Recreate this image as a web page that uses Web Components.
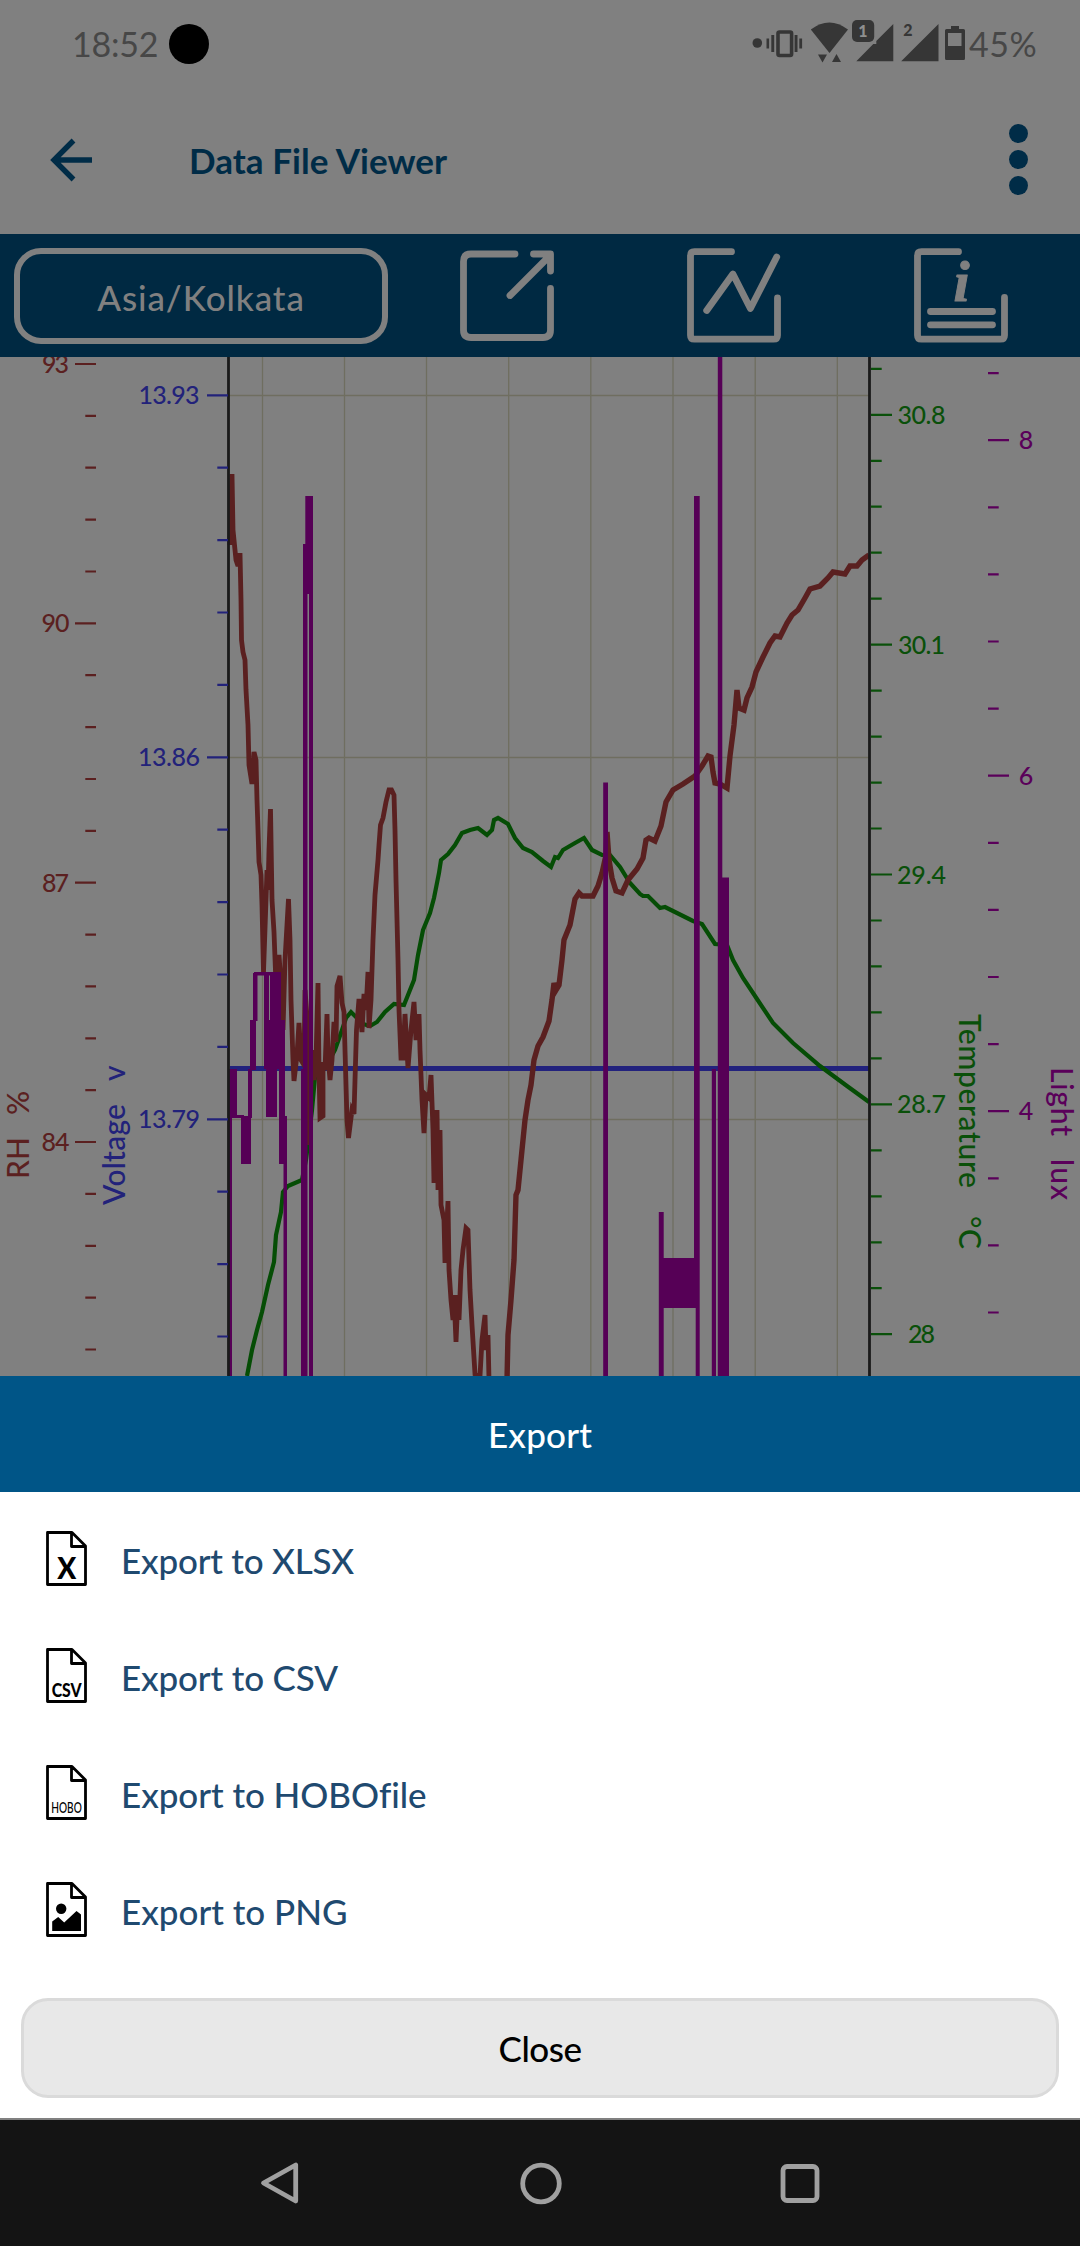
<!DOCTYPE html>
<html lang="en">
<head>
<meta charset="utf-8">
<title>Data File Viewer</title>
<style>
    html, body {
        margin: 0;
        padding: 0;
    }

    body {
        width: 1080px;
        height: 2246px;
        overflow: hidden;
        background: #808080;
        font-family: Lato, "Noto Sans", sans-serif;
    }
</style>
</head>
<body>
<viewer-app>
    <status-bar time="18:52" battery="45%"></status-bar>
    <title-bar>Data File Viewer</title-bar>
    <tool-bar>Asia/Kolkata</tool-bar>
    <data-chart></data-chart>
    <export-sheet heading="Export">
        <export-item icon="xlsx" style="--track: -0.2px">Export to XLSX</export-item>
        <export-item icon="csv" style="--track: -0.15px">Export to CSV</export-item>
        <export-item icon="hobo" style="--track: -0.05px">Export to HOBOfile</export-item>
        <export-item icon="png" style="--track: 0px">Export to PNG</export-item>
    </export-sheet>
    <nav-bar></nav-bar>
</viewer-app>

<script>
class ViewerApp extends HTMLElement {
    constructor() {
        super();
        this.attachShadow({ mode: "open" });
    }

    connectedCallback() {
        this.shadowRoot.innerHTML = `
            <style>
                :host {
                    display: flex;
                    flex-direction: column;
                    width: 1080px;
                    height: 2246px;
                }
            </style>
            <slot></slot>
        `;
    }
}

class StatusBar extends HTMLElement {
    constructor() {
        super();
        this.attachShadow({ mode: "open" });
    }

    connectedCallback() {
        this.shadowRoot.innerHTML = `
            <style>
                :host {
                    display: flex;
                    align-items: center;
                    box-sizing: border-box;
                    height: 88px;
                    padding: 0 42px 0 72px;
                    color: #474747;
                    font-size: 34px;
                    line-height: 40px;
                }

                .time {
                    width: 97px;
                    letter-spacing: -0.2px;
                }

                .camera {
                    width: 40px;
                    height: 40px;
                    border-radius: 50%;
                    background: #000;
                }

                svg {
                    display: block;
                    margin-left: auto;
                }

                .battery {
                    width: 69px;
                    margin-left: 2px;
                    white-space: nowrap;
                    letter-spacing: 0.5px;
                }
            </style>

            <span class="time">${this.getAttribute("time")}</span>
            <span class="camera"></span>
            <svg width="217" height="88" viewBox="750 0 217 88" fill="#363636">
                <!-- vibrate -->
                <circle cx="757.3" cy="43" r="4.8"/>
                <path d="M766.5 38.5h2.6v10h-2.6zM771.3 35h2.9v17h-2.9zM794.6 35h2.9v17h-2.9zM799.3 38.5h2.8v10h-2.8z"/>
                <rect x="778" y="32" width="13.6" height="23.5" rx="1.5" fill="none" stroke="#363636" stroke-width="3.6"/>
                <!-- wifi -->
                <path d="M810.8 29.5Q829.3 15.5 848 29.5L829.5 53z"/>
                <path d="M818 54.5h9l-4.5 8zM832 62h9l-4.5-8z"/>
                <!-- sim 1 -->
                <path d="M893.3 24v37.3h-37l17-17.3h3V41z"/>
                <rect x="852" y="20" width="22.2" height="22" rx="5"/>
                <text x="863" y="36.5" font-size="16" font-weight="900" text-anchor="middle" fill="#8f8f8f">1</text>
                <!-- sim 2 -->
                <path d="M938.5 24v37.3h-37.3z"/>
                <text x="908" y="36" font-size="16" font-weight="900" text-anchor="middle">2</text>
                <!-- battery -->
                <path fill-rule="evenodd" d="M951 26h8v3h4.500q1.500 0 1.500 1.500v28q0 1.500-1.500 1.500h-17q-1.500 0-1.500-1.500v-28q0-1.500 1.500-1.500h4.500zM948 33v13h13.500V33z"/>
            </svg>
            <span class="battery">${this.getAttribute("battery")}</span>
        `;
    }
}

class TitleBar extends HTMLElement {
    constructor() {
        super();
        this.attachShadow({ mode: "open" });
    }

    connectedCallback() {
        this.shadowRoot.innerHTML = `
            <style>
                :host {
                    display: flex;
                    align-items: center;
                    box-sizing: border-box;
                    height: 146px;
                    padding: 0 52px 3px 50px;
                    color: #002c47;
                }

                h1 {
                    flex: 1;
                    margin: 1px 0 0 96px;
                    font-size: 35px;
                    font-weight: 700;
                    letter-spacing: 0.05px;
                }

                .menu {
                    display: flex;
                    flex-direction: column;
                    gap: 7px;
                }

                .menu i {
                    width: 19px;
                    height: 19px;
                    border-radius: 50%;
                    background: currentColor;
                }
            </style>

            <svg width="43" height="44" viewBox="0 0 43 44" fill="none" stroke="currentColor" stroke-width="5.4">
                <path d="M42 22H5M23.500 2.500L4 22l19.500 19.500"/>
            </svg>
            <h1><slot></slot></h1>
            <div class="menu"><i></i><i></i><i></i></div>
        `;
    }
}

class ToolBar extends HTMLElement {
    constructor() {
        super();
        this.attachShadow({ mode: "open" });
    }

    connectedCallback() {
        this.shadowRoot.innerHTML = `
            <style>
                :host {
                    display: flex;
                    align-items: center;
                    box-sizing: border-box;
                    height: 123px;
                    padding: 0 72px 0 14px;
                    background: #002942;
                    color: #808080;
                }

                .zone {
                    display: flex;
                    align-items: center;
                    justify-content: center;
                    box-sizing: border-box;
                    width: 374px;
                    height: 96px;
                    margin-right: 72px;
                    padding-top: 3px;
                    border: 6px solid #808080;
                    border-radius: 27px;
                    font-size: 35px;
                    font-weight: 500;
                    letter-spacing: 0.9px;
                }

                .tools {
                    flex: 1;
                    display: flex;
                    justify-content: space-between;
                }

                svg {
                    display: block;
                    fill: none;
                    stroke: #808080;
                    stroke-width: 6.8;
                    stroke-linecap: round;
                    stroke-linejoin: round;
                }

                text {
                    fill: #808080;
                    stroke: #808080;
                    stroke-width: 1;
                    font: italic bold 58px "Liberation Serif", serif;
                }
            </style>

            <div class="zone"><slot></slot></div>
            <div class="tools">
                <svg width="94" height="96" viewBox="460 248 94 96">
                    <path d="M515 254h-44q-7.500 0-7.500 7.500v68.500q0 7.500 7.500 7.500h72q7.500 0 7.500-7.500V288.500"/>
                    <path d="M533.500 254h17v17M510 295.500l39-39"/>
                </svg>
                <svg width="94" height="96" viewBox="687 248 94 96">
                    <path d="M731.500 251.700h-37q-4 0-4 4v79.500q0 4 4 4h79q4 0 4-4V298"/>
                    <path d="M706.700 310.500l26.200-36.500 17.500 34.500 26.300-51.500"/>
                </svg>
                <svg width="94" height="96" viewBox="914 248 94 96">
                    <path d="M958.500 251.700h-37q-4 0-4 4v79.500q0 4 4 4h79q4 0 4-4V297.500"/>
                    <path d="M930.500 311.500h62M930.500 324.800h62"/>
                    <text x="953.500" y="301">i</text>
                </svg>
            </div>
        `;
    }
}

class DataChart extends HTMLElement {
    constructor() {
        super();
        this.attachShadow({ mode: "open" });
    }

    // Evenly spaced ticks, every fifth one is longer
    ticks(axis) {
        let d = "";
        for (let i = axis.from; i <= axis.to; i++) {
            const y = (axis.start + i * axis.step).toFixed(1);
            const length = i % 5 === 0 ? 21 : 10.7;
            d += `M${axis.x} ${y}h${axis.dir * length}`;
        }
        const labels = axis.labels.map((label, n) => `
            <text x="${axis.labelX}" y="${axis.start + n * 5 * axis.step + 9}"
                text-anchor="middle" textLength="${label[1]}">${label[0]}</text>`).join("");
        return `
            <path d="${d}" stroke="${axis.color}" stroke-width="2.2"/>
            <g fill="${axis.color}" stroke="none">${labels}</g>`;
    }

    bars(list) {
        return list.map(([x1, y1, x2, y2]) => `M${x1} ${y1}H${x2}V${y2}H${x1}z`).join("");
    }

    connectedCallback() {
        const axes = [
            { color: "#5b2020", x: 96, dir: -1, start: 364, step: 51.87, from: 0, to: 19, labelX: 55.5,
                labels: [["93", 27], ["90", 28], ["87", 27], ["84", 28]] },
            { color: "#22227a", x: 228, dir: -1, start: 395.3, step: 72.4, from: 0, to: 13, labelX: 169,
                labels: [["13.93", 61], ["13.86", 62], ["13.79", 62]] },
            { color: "#0a500a", x: 871, dir: 1, start: 414.8, step: 45.97, from: -1, to: 20, labelX: 921.5,
                labels: [["30.8", 48], ["30.1", 47], ["29.4", 49], ["28.7", 49], ["28", 27]] },
            { color: "#5a005a", x: 988, dir: 1, start: 440.2, step: 67.1, from: -1, to: 13, labelX: 1026,
                labels: [["8", 13], ["6", 13], ["4", 14]] }
        ];

        const humidity = "230,545 232,474 233,530 236,560 238,566 240,553 241,600 241.500,640 243,652 245,660 246,690 248,725 249,765 252,784 254,752 256,760 257,800 258,830 259,862 261,875 262,905 263.500,972 266,900 267,870 268,890 269,850 270.500,809 272,900 274,932 276,985 279,955 281,985 283,1030 285,960 287,925 288.500,899 290,940 291,1000 293,1060 294,1081 297,1055 299,1023 301,1060 304,1065 305,990 308,1030 309,1145 312,1050 314,1080 316,1060 318,983 319,1070 320,1118 323,1116 323,1062 325,1070 327,1014 328,1055 330,1080 332,1060 334,1022 336,1042 337,986 340,976 342,1003 344,1012 345,1050 347,1120 348.500,1138 352,1110 354,1114 355,1080 356.500,1030 359,999 362,1032 364,994 366,1010 368,972 369,1028 371,1000 373,940 375,895 378,860 379,845 380.500,825 383,818 386,802 389,790 391.500,790 394,795 395,830 396,880 398,960 399,1010 401,1058 403,1058 405,1014 408,1068 411,1030 414,1002 416,1040 419,1014 420,1050 422,1100 424,1133 426,1095 429,1098 431,1075 433,1130 434,1183 437,1110 438,1190 440,1130 441,1205 444,1220 445,1263 448,1201 449,1270 451,1300 453,1320 454,1295 456,1342 458,1295 459,1320 461,1270 463,1250 466,1228 468,1230 470,1290 472,1325 475,1374 480,1376 482,1340 485,1315 486,1350 488,1335 489,1380";
        const humidityEnd = "507,1380 508,1335 511,1300 514,1260 516,1195 518,1190 521,1160 525,1120 528,1100 531,1085 534,1060 538,1046 543,1037 549,1021 552,1000 554,983 556,990 559,985 562,960 564,940 570,925 575,899 579,893 582,896 593,896 598,886 602,873 606,855 607,832 609,860 612,878 616,891 622,893 628,880 637,869 643,858 646,840 649,838 655,841 661,826 666,802 673,790 683,784 695,776 702,766 708,756 711,757 713,772 715,783 720,784 727,788 730,756 734,725 737,690 739,708 744,710 747,698 752,687 756,672 763,657 770,643 775,636 780,637 787,623 792,615 798,610 805,598 810,589 820,586 828,578 833,572 845,574 850,566 857,566 862,560 869,555";
        const temperature = "247,1376 252,1350 257,1330 262,1312 268,1285 274,1262 276,1235 281,1212 283,1192 288,1186 302,1180 306,1160 312,1110 315,1077 325,1068 335,1050 342,1030 346,1018 351,1012 357,1018 363,1024 370,1026 377,1022 385,1012 394,1004 404,1005 408,995 414,980 418,955 423,930 430,913 434,898 439,873 441,860 448,854 455,845 462,833 470,830 478,828 487,835 492,830 494,820 498,818 508,824 515,838 523,848 532,852 543,861 551,867 555,857 558,858 563,850 575,843 584,838 592,850 602,855 610,855 620,867 630,883 640,894 643,896 648,896 660,908 665,907 693,921 702,924 715,944 727,945 733,960 743,978 757,999 773,1023 793,1043 820,1066 847,1086 869,1102";
        const light = [
            [229, 1069, 232, 1377], [230, 1069, 237, 1117], [230, 1115, 244, 1118], [241, 1116, 251, 1164],
            [248, 1069, 252, 1118], [250, 1020, 256, 1070], [253, 973, 257.5, 1021], [254, 972, 281, 975.5],
            [264, 973, 269, 1069], [266, 1020, 277, 1117], [270, 973, 281, 1069], [279, 1020, 285, 1164],
            [283.500, 1116, 287, 1377], [301, 1069, 307.500, 1377], [303, 544, 307.500, 1377],
            [305.300, 496, 313, 594], [309, 590, 313, 1377],
            [603.200, 782.400, 608, 1377], [658.800, 1212, 663.700, 1377], [663, 1258, 697, 1308],
            [694, 496, 699.700, 1308], [695.700, 1300, 699.700, 1377], [711.800, 1069, 716, 1377],
            [717.800, 357, 722.300, 1377], [722, 877.500, 729, 1377]
        ];

        this.shadowRoot.innerHTML = `
            <style>
                :host {
                    display: block;
                    height: 1019px;
                    overflow: hidden;
                }

                svg {
                    display: block;
                    font-size: 25px;
                    font-weight: 500;
                }

                .name {
                    font-size: 30px;
                }
            </style>

            <svg width="1080" height="1019" viewBox="0 357 1080 1019" fill="none">
                <path d="M262.500 357V1376M344.500 357V1376M426.500 357V1376M508.700 357V1376M590.800 357V1376M673 357V1376M755.200 357V1376M837.300 357V1376
                    M229 395.500H869M229 757.500H869M229 1119.500H869" stroke="#6f6e60" stroke-width="1.3"/>
                <path d="M230 1068.500H869" stroke="#22227d" stroke-width="5"/>
                <polyline points="${temperature}" stroke="#054d05" stroke-width="4.200"/>
                <polyline points="${humidity}" stroke="#5a2020" stroke-width="4.800"/>
                <polyline points="${humidityEnd}" stroke="#5a2020" stroke-width="5.400"/>
                <path d="${this.bars(light)}" fill="#560056"/>
                <path d="M228.500 357V1376M869.500 357V1376" stroke="#1a1a1a" stroke-width="2.800"/>
                ${axes.map(axis => this.ticks(axis)).join("")}

                <text class="name" transform="translate(29 1179) rotate(-90)" fill="#5b2020">RH <tspan x="64">%</tspan></text>
                <text class="name" transform="translate(125 1205) rotate(-90)" fill="#22227a"><tspan textLength="101">Voltage</tspan> <tspan x="124">v</tspan></text>
                <text class="name" transform="translate(959 1014) rotate(90)" fill="#0a500a"><tspan textLength="174">Temperature</tspan> <tspan x="202" textLength="33">°C</tspan></text>
                <text class="name" transform="translate(1051 1067) rotate(90)" fill="#5a005a"><tspan textLength="69">Light</tspan> <tspan x="92" textLength="41">lux</tspan></text>
            </svg>
        `;
    }
}

class ExportSheet extends HTMLElement {
    constructor() {
        super();
        this.attachShadow({ mode: "open" });
    }

    connectedCallback() {
        this.shadowRoot.innerHTML = `
            <style>
                :host {
                    display: flex;
                    flex-direction: column;
                    box-sizing: border-box;
                    height: 744px;
                    background: #fff;
                    border-bottom: 2px solid #808080;
                }

                h2 {
                    margin: 0;
                    height: 116px;
                    line-height: 116px;
                    background: #005587;
                    color: #fff;
                    text-align: center;
                    font-size: 35px;
                    font-weight: 500;
                    letter-spacing: 0.2px;
                }

                .list {
                    padding-top: 8px;
                    height: 498px;
                }

                button {
                    height: 100px;
                    margin: 0 21px;
                    padding: 0;
                    border: 3px solid #dadada;
                    border-radius: 27px;
                    background: #e8e8e8;
                    color: #000;
                    font: 500 35px Lato, sans-serif;
                    letter-spacing: -0.5px;
                }
            </style>

            <h2>${this.getAttribute("heading")}</h2>
            <div class="list"><slot></slot></div>
            <button>Close</button>
        `;
    }
}

class ExportItem extends HTMLElement {
    constructor() {
        super();
        this.attachShadow({ mode: "open" });
    }

    connectedCallback() {
        const marks = {
            xlsx: `<text x="20.700" y="48" font-size="30" font-weight="900" textLength="19" lengthAdjust="spacingAndGlyphs">X</text>`,
            csv: `<text x="20.700" y="48.500" font-size="19" font-weight="900" textLength="30" lengthAdjust="spacingAndGlyphs">CSV</text>`,
            hobo: `<text transform="translate(20.500 48) scale(0.63 1)" font-size="16">HOBO</text>`,
            png: `<circle cx="15.200" cy="26.700" r="5.200"/><path d="M6.200 49V39.500l6-4.500 6 5.500L30.500 29l4.500 3.500V49z"/>`
        };

        this.shadowRoot.innerHTML = `
            <style>
                :host {
                    display: flex;
                    align-items: center;
                    height: 117px;
                    padding-left: 46px;
                    color: #1f4a70;
                    font-size: 35px;
                    font-weight: 500;
                    letter-spacing: var(--track, 0);
                }

                svg {
                    display: block;
                    overflow: visible;
                    margin-right: 34px;
                    letter-spacing: 0;
                    text-anchor: middle;
                }

                span {
                    padding-top: 3px;
                }
            </style>

            <svg width="41" height="55" viewBox="0 0 41 55">
                <path d="M1.500 1.500H26L39.500 15v38.500h-38zM25.500 1.500V15.500h14" fill="none" stroke="#000" stroke-width="2.800" stroke-linejoin="round"/>
                ${marks[this.getAttribute("icon")]}
            </svg>
            <span><slot></slot></span>
        `;
    }
}

class NavBar extends HTMLElement {
    constructor() {
        super();
        this.attachShadow({ mode: "open" });
    }

    connectedCallback() {
        this.shadowRoot.innerHTML = `
            <style>
                :host {
                    display: flex;
                    align-items: center;
                    justify-content: space-between;
                    box-sizing: border-box;
                    height: 126px;
                    padding: 0 258px 0 259px;
                    background: #141414;
                }

                svg {
                    fill: none;
                    stroke: #a0a0a0;
                    stroke-width: 4.800;
                    stroke-linejoin: round;
                }
            </style>

            <svg width="44" height="44" viewBox="0 0 44 44"><path d="M36.700 4v36L4.500 22z"/></svg>
            <svg width="44" height="44" viewBox="0 0 44 44"><circle cx="22" cy="22.500" r="18.300"/></svg>
            <svg width="44" height="44" viewBox="0 0 44 44"><rect x="5" y="5.500" width="34" height="34" rx="4"/></svg>
        `;
    }
}

customElements.define("viewer-app", ViewerApp);
customElements.define("status-bar", StatusBar);
customElements.define("title-bar", TitleBar);
customElements.define("tool-bar", ToolBar);
customElements.define("data-chart", DataChart);
customElements.define("export-sheet", ExportSheet);
customElements.define("export-item", ExportItem);
customElements.define("nav-bar", NavBar);
</script>
</body>
</html>
